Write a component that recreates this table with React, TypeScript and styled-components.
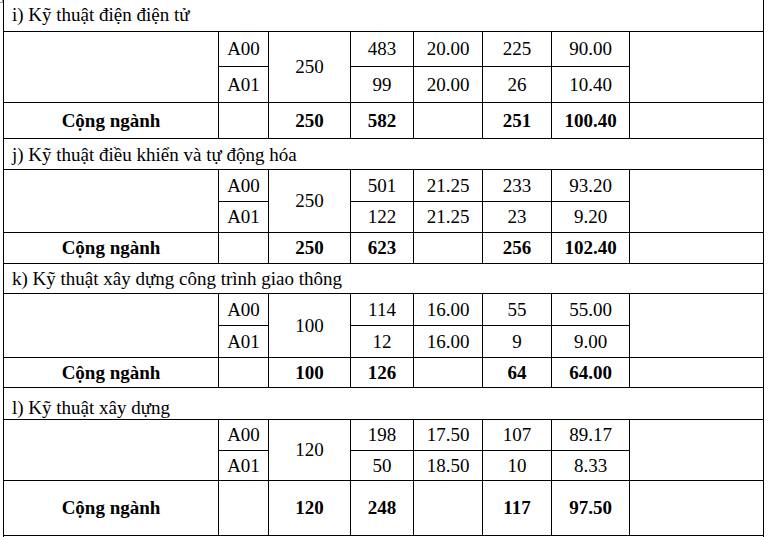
import React from 'react';
import styled, { createGlobalStyle } from 'styled-components';

const GlobalStyle = createGlobalStyle`
    html, body {
        margin: 0;
        padding: 0;
        background: #ffffff;
        overflow: hidden;
    }
    body {
        font-family: 'Liberation Serif', Tinos, 'Times New Roman', Times, 'DejaVu Serif', serif;
        color: #000000;
    }
`

const Page = styled.div`
    position: relative;
    width: 770px;
    height: 537px;
    overflow: hidden;
    padding-left: 3px;
    box-sizing: border-box;
`

const CornerMark = styled.span`
    position: absolute;
    top: 0;
    left: 0;
    width: 2px;
    height: 2px;
    border-right: 1px solid #9a9a9a;
    border-bottom: 1px solid #9a9a9a;
`

const Table = styled.table`
    border-collapse: collapse;
    table-layout: fixed;
    width: 761px;
    margin-top: -1px;
    font-family: 'Liberation Serif', Tinos, 'Times New Roman', Times, 'DejaVu Serif', serif;
    font-size: 19px;
    line-height: 22px;
    color: #000000;
`

const Col = styled.col<{ $w: number }>`
    width: ${p => p.$w}px;
`

const Row = styled.tr<{ $h: number }>`
    height: ${p => p.$h}px;
`

const Cell = styled.td<{ $bold?: boolean }>`
    border: 1px solid #000000;
    padding: 0 4px;
    text-align: center;
    vertical-align: middle;
    font-weight: ${p => (p.$bold ? 700 : 400)};
    white-space: nowrap;
`

const TitleCell = styled.td<{ $pad: number }>`
    border: 1px solid #000000;
    padding: 0 7px ${p => p.$pad}px 8px;
    text-align: left;
    vertical-align: bottom;
    white-space: nowrap;
`

type Line = { code: string; count: string; score: string; admitted: string; pct: string };

type Section = {
    title: string;
    quota: string;
    lines: Line[];
    total: { count: string; admitted: string; pct: string };
    heights: [number, number, number, number];
    titlePad: number;
};

const widths = [215, 50, 82, 63, 69, 69, 78, 134];

const sections: Section[] = [
    {
        title: 'i) Kỹ thuật điện điện tử',
        quota: '250',
        lines: [
            { code: 'A00', count: '483', score: '20.00', admitted: '225', pct: '90.00' },
            { code: 'A01', count: '99', score: '20.00', admitted: '26', pct: '10.40' },
        ],
        total: { count: '582', admitted: '251', pct: '100.40' },
        heights: [32, 35, 36, 36],
        titlePad: 5,
    },
    {
        title: 'j) Kỹ thuật điều khiển và tự động hóa',
        quota: '250',
        lines: [
            { code: 'A00', count: '501', score: '21.25', admitted: '233', pct: '93.20' },
            { code: 'A01', count: '122', score: '21.25', admitted: '23', pct: '9.20' },
        ],
        total: { count: '623', admitted: '256', pct: '102.40' },
        heights: [31, 32, 31, 31],
        titlePad: 3,
    },
    {
        title: 'k) Kỹ thuật xây dựng công trình giao thông',
        quota: '100',
        lines: [
            { code: 'A00', count: '114', score: '16.00', admitted: '55', pct: '55.00' },
            { code: 'A01', count: '12', score: '16.00', admitted: '9', pct: '9.00' },
        ],
        total: { count: '126', admitted: '64', pct: '64.00' },
        heights: [30, 32, 32, 30],
        titlePad: 3,
    },
    {
        title: 'l) Kỹ thuật xây dựng',
        quota: '120',
        lines: [
            { code: 'A00', count: '198', score: '17.50', admitted: '107', pct: '89.17' },
            { code: 'A01', count: '50', score: '18.50', admitted: '10', pct: '8.33' },
        ],
        total: { count: '248', admitted: '117', pct: '97.50' },
        heights: [32, 31, 30, 55],
        titlePad: 0,
    },
];

function SectionRows({ s }: { s: Section }) {
    return (
        <>
            <Row $h={s.heights[0]}>
                <TitleCell colSpan={8} $pad={s.titlePad}>{s.title}</TitleCell>
            </Row>
            {s.lines.map((l, i) => (
                <Row key={l.code} $h={s.heights[i + 1]}>
                    {i === 0 && <Cell rowSpan={2} />}
                    <Cell>{l.code}</Cell>
                    {i === 0 && <Cell rowSpan={2}>{s.quota}</Cell>}
                    <Cell>{l.count}</Cell>
                    <Cell>{l.score}</Cell>
                    <Cell>{l.admitted}</Cell>
                    <Cell>{l.pct}</Cell>
                    {i === 0 && <Cell rowSpan={2} />}
                </Row>
            ))}
            <Row $h={s.heights[3]}>
                <Cell $bold>Cộng ngành</Cell>
                <Cell />
                <Cell $bold>{s.quota}</Cell>
                <Cell $bold>{s.total.count}</Cell>
                <Cell />
                <Cell $bold>{s.total.admitted}</Cell>
                <Cell $bold>{s.total.pct}</Cell>
                <Cell />
            </Row>
        </>
    );
}

export default function App() {
    return (
        <Page>
            <GlobalStyle />
            <CornerMark />
            <Table>
                <colgroup>
                    {widths.map((w, i) => (
                        <Col key={i} $w={w} />
                    ))}
                </colgroup>
                <tbody>
                    {sections.map(s => (
                        <SectionRows key={s.title} s={s} />
                    ))}
                    <Row $h={31}>
                        <TitleCell colSpan={8} $pad={3} />
                    </Row>
                </tbody>
            </Table>
        </Page>
    );
}
